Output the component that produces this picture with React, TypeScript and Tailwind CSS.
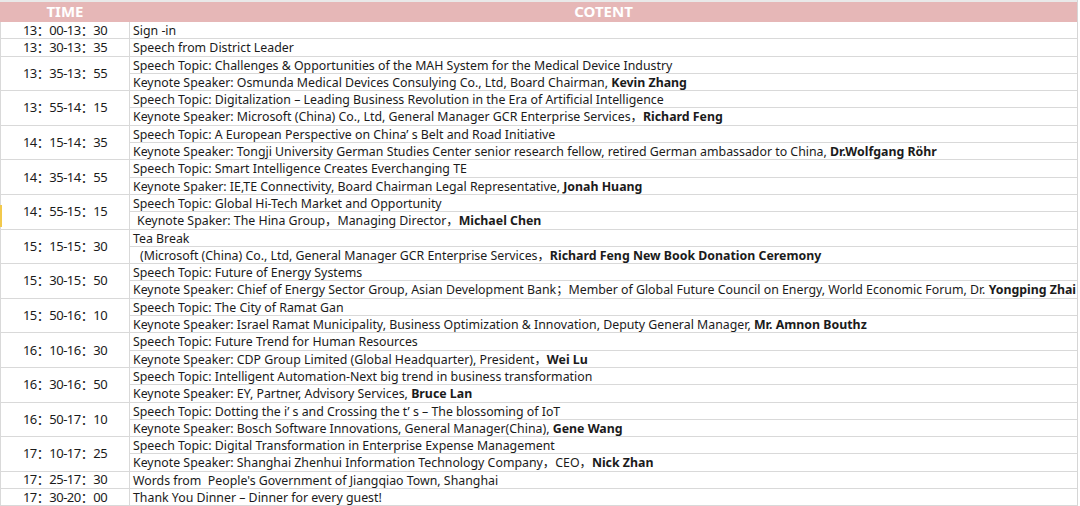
import type { ReactNode } from 'react';

type Entry = {
    time: string;
    lines: ReactNode[];
    flag?: boolean;
};

const entries: Entry[] = [
    { time: '13：00-13：30', lines: ['Sign -in'] },
    { time: '13：30-13：35', lines: ['Speech from District Leader'] },
    {
        time: '13：35-13：55',
        lines: [
            'Speech Topic: Challenges & Opportunities of the MAH System for the Medical Device Industry',
            <>Keynote Speaker: Osmunda Medical Devices Consulying Co., Ltd, Board Chairman, <b>Kevin Zhang</b></>,
        ],
    },
    {
        time: '13：55-14：15',
        lines: [
            'Speech Topic: Digitalization – Leading Business Revolution in the Era of Artificial Intelligence',
            <>Keynote Speaker: Microsoft (China) Co., Ltd, General Manager GCR Enterprise Services，<b>Richard Feng</b></>,
        ],
    },
    {
        time: '14：15-14：35',
        lines: [
            'Speech Topic: A European Perspective on China’ s Belt and Road Initiative',
            <>Keynote Speaker: Tongji University German Studies Center senior research fellow, retired German ambassador to China, <b>Dr.Wolfgang Röhr</b></>,
        ],
    },
    {
        time: '14：35-14：55',
        lines: [
            'Speech Topic: Smart Intelligence Creates Everchanging TE',
            <>Keynote Spaker: IE,TE Connectivity, Board Chairman Legal Representative, <b>Jonah Huang</b></>,
        ],
    },
    {
        time: '14：55-15：15',
        flag: true,
        lines: [
            'Speech Topic: Global Hi-Tech Market and Opportunity',
            <span className="pl-[4px]">Keynote Spaker: The Hina Group，Managing Director，<b>Michael Chen</b></span>,
        ],
    },
    {
        time: '15：15-15：30',
        lines: [
            'Tea Break',
            <span className="pl-[7px]">(Microsoft (China) Co., Ltd, General Manager GCR Enterprise Services，<b>Richard Feng New Book Donation Ceremony</b></span>,
        ],
    },
    {
        time: '15：30-15：50',
        lines: [
            'Speech Topic: Future of Energy Systems',
            <>Keynote Speaker: Chief of Energy Sector Group, Asian Development Bank；Member of Global Future Council on Energy, World Economic Forum, Dr. <b>Yongping Zhai</b></>,
        ],
    },
    {
        time: '15：50-16：10',
        lines: [
            'Speech Topic: The City of Ramat Gan',
            <>Keynote Speaker: Israel Ramat Municipality, Business Optimization & Innovation, Deputy General Manager, <b>Mr. Amnon Bouthz</b></>,
        ],
    },
    {
        time: '16：10-16：30',
        lines: [
            'Speech Topic: Future Trend for Human Resources',
            <>Keynote Speaker: CDP Group Limited (Global Headquarter), President，<b>Wei Lu</b></>,
        ],
    },
    {
        time: '16：30-16：50',
        lines: [
            'Speech Topic: Intelligent Automation-Next big trend in business transformation',
            <>Keynote Speaker: EY, Partner, Advisory Services, <b>Bruce Lan</b></>,
        ],
    },
    {
        time: '16：50-17：10',
        lines: [
            'Speech Topic: Dotting the i’ s and Crossing the t’ s – The blossoming of IoT',
            <>Keynote Speaker: Bosch Software Innovations, General Manager(China), <b>Gene Wang</b></>,
        ],
    },
    {
        time: '17：10-17：25',
        lines: [
            'Speech Topic: Digital Transformation in Enterprise Expense Management',
            <>Keynote Speaker: Shanghai Zhenhui Information Technology Company，CEO，<b>Nick Zhan</b></>,
        ],
    },
    { time: '17：25-17：30', lines: ["Words from \u00a0People's Government of Jiangqiao Town, Shanghai"] },
    { time: '17：30-20：00', lines: ['Thank You Dinner – Dinner for every guest!'] },
];

const App = () => {
    return (
        <div
            className="w-[1080px] h-[506px] overflow-hidden bg-white text-[#1b1b1b]"
            style={{ fontFamily: '"Noto Sans", "Noto Sans CJK SC", sans-serif' }}
        >
            <div className="w-[1078px] border-r border-[#d6d6d6]">
                {/* Header band */}
                <div className="flex h-[22px] border-t-2 border-[#e9e9e9] bg-[#e6b7b7] text-[15px] font-bold text-white leading-[18px]">
                    <div className="w-[130px] text-center">TIME</div>
                    <div className="flex-1 text-center">COTENT</div>
                </div>

                {/* Schedule rows */}
                {entries.map((e) => (
                    <div key={e.time} className="flex">
                        <div className="relative w-[130px] shrink-0 flex items-center justify-center border-r border-l border-b border-[#d9d9d9] text-[13px] leading-[15px] tracking-[-0.5px]">
                            {e.flag && <div className="absolute left-[-1px] top-[10px] h-[22px] w-[2px] bg-[#f2c94c]" />}
                            {e.time}
                        </div>
                        <div className="flex-1 flex flex-col">
                            {e.lines.map((l, i) => (
                                <div
                                    key={i}
                                    className="h-[17.3px] pl-[3px] whitespace-nowrap overflow-hidden text-[12.35px] leading-[17px] border-b border-[#d9d9d9]"
                                >
                                    {l}
                                </div>
                            ))}
                        </div>
                    </div>
                ))}
            </div>
        </div>
    );
};

export default App;
